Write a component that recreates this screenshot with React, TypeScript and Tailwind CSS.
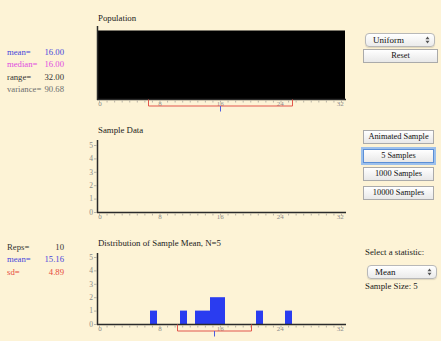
import type { ReactNode } from 'react';

// page-coordinate helpers for the charts
const xs = (v: number) => 99 + 7.5625 * v;
const xl = (v: number) => 100 + 7.51 * v;

function XAxis({ y }: { y: number }) {
  return (
    <g>
      <line x1={97} x2={346} y1={y + 0.5} y2={y + 0.5} stroke="#2a2a2a" strokeWidth={1.5} />
      {Array.from({ length: 33 }, (_, i) => (
        <line key={i} x1={xs(i) + 0.5} x2={xs(i) + 0.5} y1={y + 1.5} y2={y + 3.5} stroke="#a9a49a" strokeWidth={0.8} />
      ))}
      {[0, 8, 16, 24, 32].map(v => (
        <text key={v} x={xl(v)} y={y + 7} fontSize={7} fill="#8a8a8a" textAnchor="middle">{v}</text>
      ))}
    </g>
  );
}

function YAxis({ top, base, labels }: { top: number; base: number; labels?: boolean }) {
  return (
    <g>
      <line x1={97.5} x2={97.5} y1={top} y2={base + 1} stroke="#2a2a2a" strokeWidth={1.5} />
      {labels &&
        [0, 1, 2, 3, 4, 5].map(k => {
          const y = base - 13.4 * k;
          return (
            <g key={k}>
              <line x1={94} x2={97} y1={y + 0.5} y2={y + 0.5} stroke="#a9a49a" strokeWidth={0.8} />
              <text x={93} y={y + 2.8} fontSize={7.5} fill="#8a8a8a" textAnchor="end">{k}</text>
            </g>
          );
        })}
    </g>
  );
}

function Bracket({ x1, x2, y, mean }: { x1: number; x2: number; y: number; mean: number }) {
  return (
    <g>
      <path d={`M${x1 + 0.5} ${y} V${y + 6.5} H${x2 + 0.5} V${y}`} fill="none" stroke="#e2574c" strokeWidth={1} />
      <line x1={mean + 0.5} x2={mean + 0.5} y1={y + 6.5} y2={y + 12} stroke="#4d5be0" strokeWidth={1} />
    </g>
  );
}

function Chart({ y0, children }: { y0: number; children: ReactNode }) {
  return (
    <svg width={270} height={91} viewBox={`80 ${y0} 270 91`} className="block font-['Liberation_Serif',serif]">
      {children}
    </svg>
  );
}

function Stat({ label, value, color }: { label: string; value: string; color: string }) {
  return (
    <div className={`flex justify-between ${color}`}>
      <span>{label}</span>
      <span>{value}</span>
    </div>
  );
}

function FakeSelect({ label }: { label: string }) {
  return (
    <div className="ml-[2px] flex h-[14px] w-[70px] items-center justify-between rounded-[4px] border border-[#b8b8b8] bg-linear-to-b from-white to-[#ebebeb] pl-[7px] pr-[4px] text-[9px] leading-none text-[#111] shadow-[0_1px_1px_rgba(0,0,0,0.12)]">
      <span>{label}</span>
      <svg width="5" height="8" viewBox="0 0 5 8">
        <path d="M2.5 0.5 L4.5 3.2 H0.5Z M2.5 7.5 L4.5 4.8 H0.5Z" fill="#555" />
      </svg>
    </div>
  );
}

function Btn({ children, focus, w = 'w-[71px]' }: { children: ReactNode; focus?: boolean; w?: string }) {
  return (
    <button
      className={`${w} h-[14px] whitespace-nowrap border bg-linear-to-b from-white to-[#e8e8e8] px-0 text-center text-[8.4px] leading-[12px] text-[#111] ${
        focus ? 'border-[#5b8fd6] ring-2 ring-[#9cc0ec]' : 'border-[#aaaaaa]'
      }`}
    >
      {children}
    </button>
  );
}

const bars: [number, number, number][] = [
  [150, 157, 1],
  [180, 187, 1],
  [195, 210, 1],
  [210, 225, 2],
  [256, 263, 1],
  [285, 292, 1],
];

export default function App() {
  return (
    <div className="flex h-[341px] w-[441px] flex-col overflow-hidden bg-[#fdf3d6] font-['Liberation_Serif',serif] text-[#1a1a1a]">
      {/* Population */}
      <div className="flex h-[115px]">
        <div className="w-[80px] pl-[7px] pt-[46px]">
          <div className="w-[57px] text-[8.7px] leading-[12.3px]">
            <Stat label="mean=" value="16.00" color="text-[#4646dc]" />
            <Stat label="median=" value="16.00" color="text-[#e04ce0]" />
            <Stat label="range=" value="32.00" color="text-[#333]" />
            <Stat label="variance=" value="90.68" color="text-[#6e6e6e]" />
          </div>
        </div>
        <div className="flex w-[270px] flex-col">
          <div className="h-[25px] pl-[18px] pt-[13px] text-[8.8px] leading-[10px]">Population</div>
          <svg width={270} height={90} viewBox="80 25 270 90" className="block">
            <rect x={97} y={30.5} width={248} height={69} fill="#000" />
            <YAxis top={26} base={99} />
            <XAxis y={99} />
            <Bracket x1={148} x2={292} y={99.5} mean={220} />
          </svg>
        </div>
        <div className="flex flex-1 flex-col gap-[2px] pl-[13px] pt-[33px]">
          <FakeSelect label="Uniform" />
          <Btn w="w-[75px]">Reset</Btn>
        </div>
      </div>

      {/* Sample data */}
      <div className="flex h-[113px]">
        <div className="w-[80px]" />
        <div className="flex w-[270px] flex-col">
          <div className="h-[22px] pl-[18px] pt-[10px] text-[8.8px] leading-[10px]">Sample Data</div>
          <Chart y0={137}>
            <YAxis top={140} base={212} labels />
            <XAxis y={212} />
          </Chart>
        </div>
        <div className="flex flex-1 flex-col gap-[4.5px] pl-[13px] pt-[15px]">
          <Btn>Animated Sample</Btn>
          <Btn focus>5 Samples</Btn>
          <Btn>1000 Samples</Btn>
          <Btn>10000 Samples</Btn>
        </div>
      </div>

      {/* Distribution of sample mean */}
      <div className="flex h-[113px]">
        <div className="w-[80px] pl-[7px] pt-[13px]">
          <div className="w-[57px] text-[8.7px] leading-[12.3px]">
            <Stat label="Reps=" value="10" color="text-[#333]" />
            <Stat label="mean=" value="15.16" color="text-[#4646dc]" />
            <Stat label="sd=" value="4.89" color="text-[#e64a3c]" />
          </div>
        </div>
        <div className="flex w-[270px] flex-col">
          <div className="h-[22px] pl-[18px] pt-[10px] text-[8.8px] leading-[10px]">Distribution of Sample Mean, N=5</div>
          <Chart y0={250}>
            {bars.map(([a, b, h], i) => (
              <rect key={i} x={a} y={324 - 13.4 * h} width={b - a} height={13.4 * h} fill="#2a3cf0" />
            ))}
            <YAxis top={253} base={324} labels />
            <XAxis y={324} />
            <Bracket x1={177} x2={251} y={324.5} mean={214} />
          </Chart>
        </div>
        <div className="flex flex-1 flex-col pl-[15px] pt-[18px] text-[8.8px] leading-[12px]">
          <div>Select a statistic:</div>
          <div className="mt-[7px]">
            <FakeSelect label="Mean" />
          </div>
          <div className="mt-[1px]">Sample Size: 5</div>
        </div>
      </div>
    </div>
  );
}
